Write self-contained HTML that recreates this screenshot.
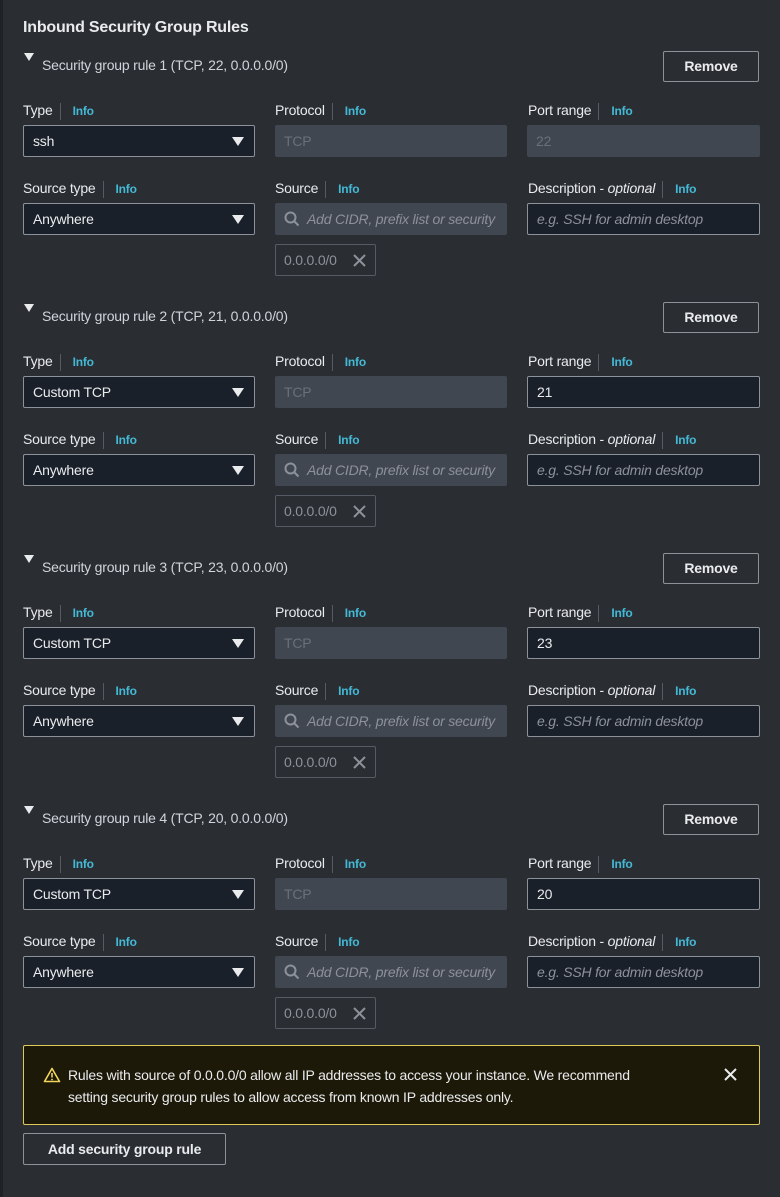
<!DOCTYPE html>
<html><head><style>
*{box-sizing:border-box;margin:0;padding:0}
body{width:780px;height:1197px;background:#2a2e33;font-family:"Liberation Sans",sans-serif;font-size:14px;color:#d1d5db;position:relative;overflow:hidden;letter-spacing:-0.2px}
.edge{position:absolute;left:0;top:0;width:3px;height:1197px;background:#1e2227}
.a{position:absolute}
h1{position:absolute;left:23px;top:19px;font-size:16px;font-weight:bold;color:#e9ebed}
.rule{position:absolute;left:0;width:780px;height:251px}
.tri{position:absolute;left:24px;top:8px;width:0;height:0;border-left:5px solid transparent;border-right:5px solid transparent;border-top:8px solid #e9ebed}
.hdr{position:absolute;left:42px;top:12px;font-size:14px;color:#d1d5db}
.btn{position:absolute;border:1px solid #8d9199;border-radius:2px;color:#e9ebed;font-weight:bold;font-size:14px;text-align:center;background:transparent}
.lbl{position:absolute;font-size:14px;color:#e9ebed;white-space:nowrap;height:18px;line-height:18px}
.lbl .sep{display:inline-block;width:1px;height:17px;background:#545b64;vertical-align:middle;margin:0 12px 0 7px}
.lbl b{color:#44b9d6;font-size:12px}
.in{position:absolute;width:232px;height:32px;border:1px solid #8d9199;border-radius:2px;background:#1a2029;color:#e9ebed;padding-left:9px;line-height:30px;font-size:14px}
.dis{position:absolute;width:232px;height:32px;border-radius:2px;background:#414750;color:#687078;padding-left:9px;line-height:32px;font-size:14px}
.arr{position:absolute;right:10px;top:11px;width:0;height:0;border-left:6px solid transparent;border-right:6px solid transparent;border-top:9px solid #e9ebed}
.ph{font-style:italic;color:#8d9199}
.tok{position:absolute;width:101px;height:32px;border:1px solid #545b64;border-radius:2px;color:#8d9199;padding-left:8px;line-height:30px}
</style></head><body>
<div class="edge"></div>
<h1>Inbound Security Group Rules</h1>

<div class="rule" style="top:45px">
<div class="tri"></div><div class="hdr">Security group rule 1 (TCP, 22, 0.0.0.0/0)</div>
<div class="btn" style="left:663px;top:6px;width:96px;height:31px;line-height:29px">Remove</div>
<div class="lbl" style="left:23px;top:56px">Type<span class="sep"></span><b>Info</b></div>
<div class="lbl" style="left:275px;top:56px">Protocol<span class="sep"></span><b>Info</b></div>
<div class="lbl" style="left:528px;top:56px">Port range<span class="sep"></span><b>Info</b></div>
<div class="in" style="left:23px;top:80px">ssh<div class="arr"></div></div>
<div class="dis" style="left:275px;top:80px">TCP</div>
<div class="dis" style="left:527px;top:80px;width:233px">22</div>
<div class="lbl" style="left:23px;top:134px">Source type<span class="sep"></span><b>Info</b></div>
<div class="lbl" style="left:275px;top:134px">Source<span class="sep"></span><b>Info</b></div>
<div class="lbl" style="left:528px;top:134px">Description - <i>optional</i><span class="sep"></span><b>Info</b></div>
<div class="in" style="left:23px;top:158px">Anywhere<div class="arr"></div></div>
<div class="dis ph" style="left:275px;top:158px;padding-left:32px;white-space:nowrap;overflow:hidden"><svg class="a" style="left:9px;top:8px" width="16" height="16" viewBox="0 0 16 16"><circle cx="6.5" cy="6.5" r="5" fill="none" stroke="#8d9199" stroke-width="2"/><line x1="10" y1="10" x2="14.5" y2="14.5" stroke="#8d9199" stroke-width="2"/></svg>Add CIDR, prefix list or security</div>
<div class="in ph" style="left:527px;top:158px;width:233px">e.g. SSH for admin desktop</div>
<div class="tok" style="left:275px;top:199px">0.0.0.0/0<svg class="a" style="left:77px;top:9px" width="13" height="13"><path d="M1 1L12 12M12 1L1 12" stroke="#8d9199" stroke-width="2"/></svg></div>
</div>

<div class="rule" style="top:296px">
<div class="tri"></div><div class="hdr">Security group rule 2 (TCP, 21, 0.0.0.0/0)</div>
<div class="btn" style="left:663px;top:6px;width:96px;height:31px;line-height:29px">Remove</div>
<div class="lbl" style="left:23px;top:56px">Type<span class="sep"></span><b>Info</b></div>
<div class="lbl" style="left:275px;top:56px">Protocol<span class="sep"></span><b>Info</b></div>
<div class="lbl" style="left:528px;top:56px">Port range<span class="sep"></span><b>Info</b></div>
<div class="in" style="left:23px;top:80px">Custom TCP<div class="arr"></div></div>
<div class="dis" style="left:275px;top:80px">TCP</div>
<div class="in" style="left:527px;top:80px;width:233px">21</div>
<div class="lbl" style="left:23px;top:134px">Source type<span class="sep"></span><b>Info</b></div>
<div class="lbl" style="left:275px;top:134px">Source<span class="sep"></span><b>Info</b></div>
<div class="lbl" style="left:528px;top:134px">Description - <i>optional</i><span class="sep"></span><b>Info</b></div>
<div class="in" style="left:23px;top:158px">Anywhere<div class="arr"></div></div>
<div class="dis ph" style="left:275px;top:158px;padding-left:32px;white-space:nowrap;overflow:hidden"><svg class="a" style="left:9px;top:8px" width="16" height="16" viewBox="0 0 16 16"><circle cx="6.5" cy="6.5" r="5" fill="none" stroke="#8d9199" stroke-width="2"/><line x1="10" y1="10" x2="14.5" y2="14.5" stroke="#8d9199" stroke-width="2"/></svg>Add CIDR, prefix list or security</div>
<div class="in ph" style="left:527px;top:158px;width:233px">e.g. SSH for admin desktop</div>
<div class="tok" style="left:275px;top:199px">0.0.0.0/0<svg class="a" style="left:77px;top:9px" width="13" height="13"><path d="M1 1L12 12M12 1L1 12" stroke="#8d9199" stroke-width="2"/></svg></div>
</div>

<div class="rule" style="top:547px">
<div class="tri"></div><div class="hdr">Security group rule 3 (TCP, 23, 0.0.0.0/0)</div>
<div class="btn" style="left:663px;top:6px;width:96px;height:31px;line-height:29px">Remove</div>
<div class="lbl" style="left:23px;top:56px">Type<span class="sep"></span><b>Info</b></div>
<div class="lbl" style="left:275px;top:56px">Protocol<span class="sep"></span><b>Info</b></div>
<div class="lbl" style="left:528px;top:56px">Port range<span class="sep"></span><b>Info</b></div>
<div class="in" style="left:23px;top:80px">Custom TCP<div class="arr"></div></div>
<div class="dis" style="left:275px;top:80px">TCP</div>
<div class="in" style="left:527px;top:80px;width:233px">23</div>
<div class="lbl" style="left:23px;top:134px">Source type<span class="sep"></span><b>Info</b></div>
<div class="lbl" style="left:275px;top:134px">Source<span class="sep"></span><b>Info</b></div>
<div class="lbl" style="left:528px;top:134px">Description - <i>optional</i><span class="sep"></span><b>Info</b></div>
<div class="in" style="left:23px;top:158px">Anywhere<div class="arr"></div></div>
<div class="dis ph" style="left:275px;top:158px;padding-left:32px;white-space:nowrap;overflow:hidden"><svg class="a" style="left:9px;top:8px" width="16" height="16" viewBox="0 0 16 16"><circle cx="6.5" cy="6.5" r="5" fill="none" stroke="#8d9199" stroke-width="2"/><line x1="10" y1="10" x2="14.5" y2="14.5" stroke="#8d9199" stroke-width="2"/></svg>Add CIDR, prefix list or security</div>
<div class="in ph" style="left:527px;top:158px;width:233px">e.g. SSH for admin desktop</div>
<div class="tok" style="left:275px;top:199px">0.0.0.0/0<svg class="a" style="left:77px;top:9px" width="13" height="13"><path d="M1 1L12 12M12 1L1 12" stroke="#8d9199" stroke-width="2"/></svg></div>
</div>

<div class="rule" style="top:798px">
<div class="tri"></div><div class="hdr">Security group rule 4 (TCP, 20, 0.0.0.0/0)</div>
<div class="btn" style="left:663px;top:6px;width:96px;height:31px;line-height:29px">Remove</div>
<div class="lbl" style="left:23px;top:56px">Type<span class="sep"></span><b>Info</b></div>
<div class="lbl" style="left:275px;top:56px">Protocol<span class="sep"></span><b>Info</b></div>
<div class="lbl" style="left:528px;top:56px">Port range<span class="sep"></span><b>Info</b></div>
<div class="in" style="left:23px;top:80px">Custom TCP<div class="arr"></div></div>
<div class="dis" style="left:275px;top:80px">TCP</div>
<div class="in" style="left:527px;top:80px;width:233px">20</div>
<div class="lbl" style="left:23px;top:134px">Source type<span class="sep"></span><b>Info</b></div>
<div class="lbl" style="left:275px;top:134px">Source<span class="sep"></span><b>Info</b></div>
<div class="lbl" style="left:528px;top:134px">Description - <i>optional</i><span class="sep"></span><b>Info</b></div>
<div class="in" style="left:23px;top:158px">Anywhere<div class="arr"></div></div>
<div class="dis ph" style="left:275px;top:158px;padding-left:32px;white-space:nowrap;overflow:hidden"><svg class="a" style="left:9px;top:8px" width="16" height="16" viewBox="0 0 16 16"><circle cx="6.5" cy="6.5" r="5" fill="none" stroke="#8d9199" stroke-width="2"/><line x1="10" y1="10" x2="14.5" y2="14.5" stroke="#8d9199" stroke-width="2"/></svg>Add CIDR, prefix list or security</div>
<div class="in ph" style="left:527px;top:158px;width:233px">e.g. SSH for admin desktop</div>
<div class="tok" style="left:275px;top:199px">0.0.0.0/0<svg class="a" style="left:77px;top:9px" width="13" height="13"><path d="M1 1L12 12M12 1L1 12" stroke="#8d9199" stroke-width="2"/></svg></div>
</div>

<div class="a" style="left:23px;top:1045px;width:737px;height:80px;background:#1d1909;border:1px solid #e0ca57;border-radius:2px">
<svg class="a" style="left:19px;top:21px" width="18" height="16" viewBox="0 0 18 16"><path d="M9 1.5L16.5 14.5H1.5Z" fill="none" stroke="#f2d45c" stroke-width="1.6" stroke-linejoin="round"/><line x1="9" y1="6" x2="9" y2="10.5" stroke="#f2d45c" stroke-width="1.6"/><circle cx="9" cy="12.5" r="0.9" fill="#f2d45c"/></svg>
<div class="a" style="left:44px;top:18px;width:600px;line-height:22px;color:#e9ebed;font-size:14px">Rules with source of 0.0.0.0/0 allow all IP addresses to access your instance. We recommend setting security group rules to allow access from known IP addresses only.</div>
<svg class="a" style="left:700px;top:22px" width="13" height="13"><path d="M1 1L12 12M12 1L1 12" stroke="#e9ebed" stroke-width="2"/></svg>
</div>
<div class="btn" style="left:23px;top:1133px;width:203px;height:32px;line-height:30px">Add security group rule</div>
</body></html>
